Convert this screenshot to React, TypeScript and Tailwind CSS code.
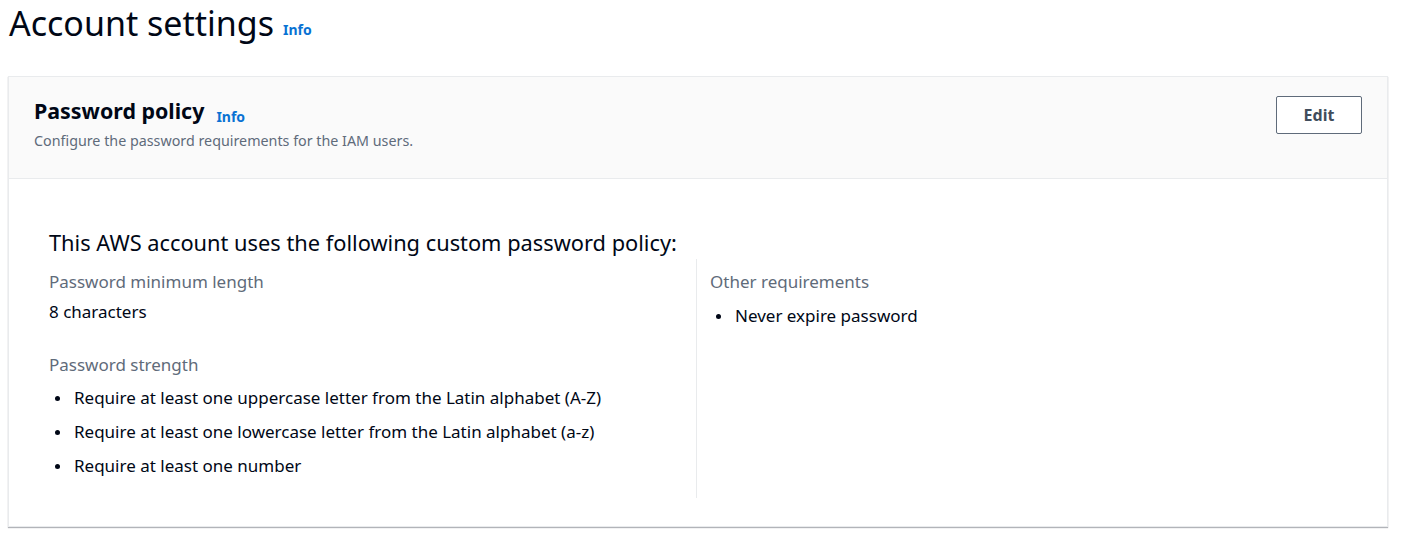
import React from 'react';

const strength = [
  'Require at least one uppercase letter from the Latin alphabet (A-Z)',
  'Require at least one lowercase letter from the Latin alphabet (a-z)',
  'Require at least one number',
];

function InfoLink({ className = '' }: { className?: string }) {
  return <a className={`font-bold text-[#0972d3] cursor-pointer ${className}`}>Info</a>;
}

export default function App() {
  return (
    <div className="min-h-[538px] bg-white text-[#000716] font-['Noto_Sans',sans-serif]">
      {/* Page header */}
      <div className="flex items-end pl-[9px] pt-[1px] h-[45px]">
        <h1 className="text-[34px] leading-[44px]">Account settings</h1>
        <InfoLink className="ml-[9px] mb-[6px] text-[14px] leading-[18px]" />
      </div>

      {/* Password policy container */}
      <div className="mt-[31px] ml-[8px] w-[1380px] bg-white border border-[#e9ebed] shadow-[0_1px_1px_0_rgba(0,7,22,0.3)]">
        <div className="flex justify-between bg-[#fafafa] border-b border-[#e9ebed] h-[102px] pl-[25px] pr-[25px] pt-[19px]">
          <div>
            <div className="flex items-end">
              <h2 className="text-[21.4px] leading-[30px] font-bold">Password policy</h2>
              <InfoLink className="ml-[12px] -mb-[1px] text-[14px] leading-[20px]" />
            </div>
            <p className="text-[14.3px] leading-[18px] text-[#5f6b7a] mt-[6px]">
              Configure the password requirements for the IAM users.
            </p>
          </div>
          <button className="h-[38px] w-[86px] border border-[#5f6b7a] rounded-[2px] text-[16px] font-bold text-[#414d5c] bg-white">
            Edit
          </button>
        </div>

        <div className="pl-[40px] pr-[40px] pt-[50px] pb-[28px]">
          <h3 className="text-[21.8px] leading-[28px]">This AWS account uses the following custom password policy:</h3>
          <div className="flex mt-[2px]">
            <div className="w-[648px] border-r border-[#e9ebed] pt-[12px] pb-[21px]">
              <div className="text-[17px] leading-[22px] text-[#5f6b7a]">Password minimum length</div>
              <div className="text-[17px] leading-[22px] mt-[8px]">8 characters</div>
              <div className="text-[17px] leading-[22px] text-[#5f6b7a] mt-[31px]">Password strength</div>
              <ul className="mt-[11px] flex flex-col gap-[12px]">
                {strength.map((s) => (
                  <li key={s} className="flex items-center text-[17px] leading-[22px]">
                    <span className="w-[5px] h-[5px] rounded-full bg-[#000716] ml-[6px] mr-[14px]" />
                    {s}
                  </li>
                ))}
              </ul>
            </div>
            <div className="pl-[13px] pt-[12px]">
              <div className="text-[17px] leading-[22px] text-[#5f6b7a]">Other requirements</div>
              <ul className="mt-[12px]">
                <li className="flex items-center text-[17px] leading-[22px]">
                  <span className="w-[5px] h-[5px] rounded-full bg-[#000716] ml-[6px] mr-[14px]" />
                  Never expire password
                </li>
              </ul>
            </div>
          </div>
        </div>
      </div>
    </div>
  );
}
